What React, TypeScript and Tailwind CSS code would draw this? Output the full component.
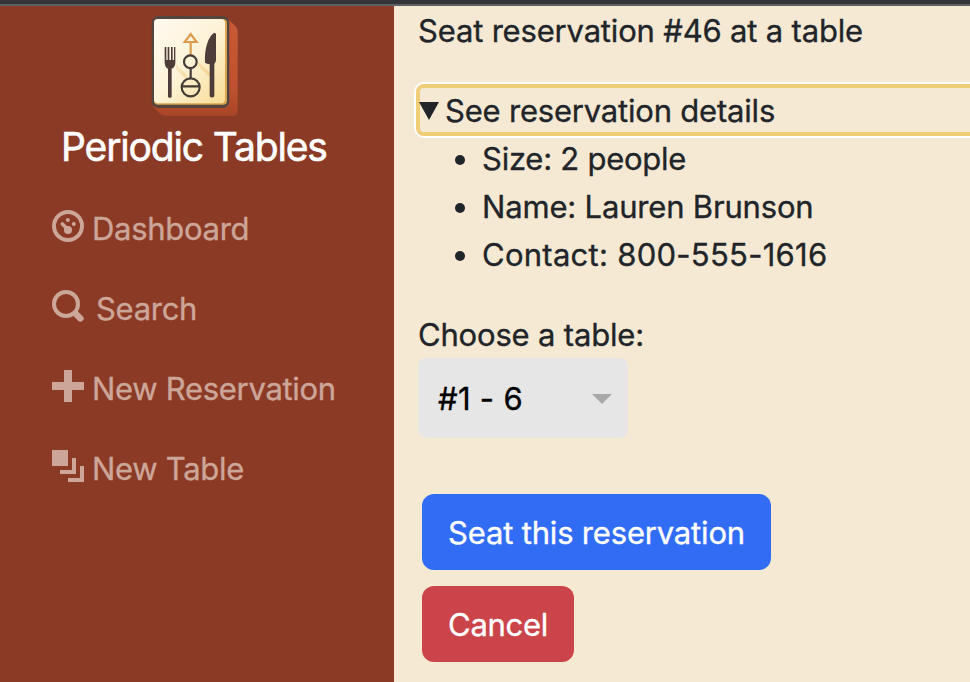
import type { ReactNode } from "react";

function Logo() {
  return (
    <svg viewBox="33 45 264 306" className="h-[102px] w-[88px]" aria-hidden="true">
      <defs>
        <linearGradient id="card" x1="0" y1="0" x2="1" y2="1">
          <stop offset="0" stopColor="#fffaf0" />
          <stop offset="0.5" stopColor="#fdf3d8" />
          <stop offset="1" stopColor="#f8dc94" />
        </linearGradient>
        <linearGradient id="side" x1="0" y1="0" x2="0" y2="1">
          <stop offset="0" stopColor="#c85a35" />
          <stop offset="0.7" stopColor="#be5230" />
          <stop offset="1" stopColor="#a94527" />
        </linearGradient>
        <linearGradient id="ray" x1="0" y1="0" x2="1" y2="1">
          <stop offset="0" stopColor="#f3cf85" stopOpacity="0.1" />
          <stop offset="1" stopColor="#f3cf85" stopOpacity="0.9" />
        </linearGradient>
      </defs>
      <path d="M256 50L286 78Q293 85 293 96V330Q293 348 275 348H78Q66 348 58 340L38 318Z" fill="url(#side)" />
      <rect x="35" y="48" width="233" height="276" rx="20" fill="#54463f" />
      <rect x="42" y="57" width="219" height="257" rx="12" fill="#d9a44e" />
      <rect x="42" y="57" width="213" height="253" rx="12" fill="url(#card)" />
      <path d="M106 188L142 226L136 236L106 206ZM170 180L209 218V232L170 192Z" fill="url(#ray)" />
      <path d="M74 141V188Q75 202 84 206V290Q90 297 95 290V206Q105 202 106 188V141H102V180H98V141H93V180H88V141H83V180H79V141Z" fill="#4d3c38" />
      <path d="M223 98C204 109 193 147 195 188Q200 192 209 193V289Q216 296 223 289V191Q228 187 228 180V103Q228 98 223 98Z" fill="#4d3c38" />
      <path d="M152 165V126M134 126H170L152 102Z" fill="none" stroke="#dc9b4b" strokeWidth="6.5" />
      <g fill="none" stroke="#443a36" strokeWidth="6.5">
        <circle cx="151" cy="185" r="19" />
        <path d="M152 204V235M125 259H179" />
        <circle cx="152" cy="262" r="27" />
      </g>
    </svg>
  );
}

const DashboardIcon = (
  <>
    <circle cx="4" cy="4" r="3.5" fill="none" stroke="currentColor" />
    <path d="M2.6 3.5L4 4.9" stroke="currentColor" strokeLinecap="round" strokeWidth="0.9" />
    <circle cx="4" cy="5" r="1" />
    <circle cx="3.95" cy="2.5" r="0.5" />
    <circle cx="5.45" cy="3.5" r="0.5" />
  </>
);

const SearchIcon = (
  <>
    <circle cx="3.5" cy="3.5" r="3" fill="none" stroke="currentColor" />
    <path d="M6 6L7.1 7.1" stroke="currentColor" strokeLinecap="round" strokeWidth="1.6" />
  </>
);

const PlusIcon = <path d="M3 0v3h-3v2h3v3h2v-3h3v-2h-3v-3h-2z" />;

const LayersIcon = <path d="M0 0v4h4v-4h-4zm5 2v3h-3v1h4v-4h-1zm2 2v3h-3v1h4v-4h-1z" />;

function NavItem({ icon, gap, children }: { icon: ReactNode; gap: string; children: ReactNode }) {
  return (
    <a className={`flex h-20 items-center ${gap}`}>
      <svg viewBox="0 0 8 8" className="mb-1.5 size-8 shrink-0" fill="currentColor" aria-hidden="true">
        {icon}
      </svg>
      <span className="whitespace-nowrap">{children}</span>
    </a>
  );
}

export default function App() {
  return (
    <div className="flex h-[682px] w-[970px] flex-col overflow-hidden bg-[#f5e9d4] font-['Inter','Liberation_Sans',sans-serif] text-[31px] leading-[48px] font-normal tracking-[-0.18px] text-[#212529] [-webkit-text-stroke:0.35px]">
      <div className="h-1.5 shrink-0 border-b-2 border-[#5f6064] bg-[#343539]" />
      <div className="flex min-h-0 flex-1">
        <aside className="w-[394px] shrink-0 bg-[#8b3a25]">
          <div className="flex flex-col pt-[9px]">
            <div className="pl-[151px]">
              <Logo />
            </div>
            <h1 className="mt-1.5 pl-[61px] text-[39px] tracking-[-1.15px] whitespace-nowrap text-white [-webkit-text-stroke:0.6px]">Periodic Tables</h1>
          </div>
          <nav className="mt-[18px] pl-[52px] tracking-[-0.3px] text-[#cda69a]">
            <NavItem icon={DashboardIcon} gap="gap-2">Dashboard</NavItem>
            <NavItem icon={SearchIcon} gap="gap-3">Search</NavItem>
            <NavItem icon={PlusIcon} gap="gap-2">New Reservation</NavItem>
            <NavItem icon={LayersIcon} gap="gap-2">New Table</NavItem>
          </nav>
        </aside>
        <main className="min-w-0 flex-1 pt-px pl-6">
          <p className="whitespace-nowrap">Seat reservation #46 at a table</p>
          <section className="mt-8">
            <div className="-mt-[3px] -mr-4 -ml-0.5 rounded-[8px] ring-2 ring-white">
              <div className="flex h-[52px] items-center rounded-[8px] border-4 border-[#f0ce78] pt-0.5 pr-4 whitespace-nowrap">
                <svg viewBox="0 0 20 18" className="mr-1.5 ml-[-1px] h-[18px] w-5" fill="#212529" aria-hidden="true">
                  <path d="M0 0H20L10 18Z" />
                </svg>
                <span className="tracking-[-0.2px]">See reservation details</span>
              </div>
            </div>
            <ul className="-mt-px list-disc pl-16">
              <li className="tracking-[-0.25px]">Size: 2 people</li>
              <li>Name: Lauren Brunson</li>
              <li className="tracking-[0.27px]">Contact: 800-555-1616</li>
            </ul>
          </section>
          <p className="mt-8">Choose a table:</p>
          <div className="-mt-px flex h-20 w-[210px] items-center justify-between rounded-lg bg-[#e6e6e6] pr-4 pl-5 tracking-[0.3px] text-black">
            <span className="mt-0.5">#1 - 6</span>
            <svg viewBox="0 0 20 10" className="mt-px h-2.5 w-5" fill="#a9a9a9" aria-hidden="true">
              <path d="M0 0H20L10 10Z" />
            </svg>
          </div>
          <div className="mt-14 ml-1 flex flex-col items-start gap-4 text-white">
            <button className="h-[76px] w-[349px] rounded-xl bg-[#316cf4] pt-0.5 whitespace-nowrap">Seat this reservation</button>
            <button className="h-[76px] w-[152px] rounded-xl bg-[#cb444a] pt-0.5 tracking-[-0.3px]">Cancel</button>
          </div>
        </main>
      </div>
    </div>
  );
}
